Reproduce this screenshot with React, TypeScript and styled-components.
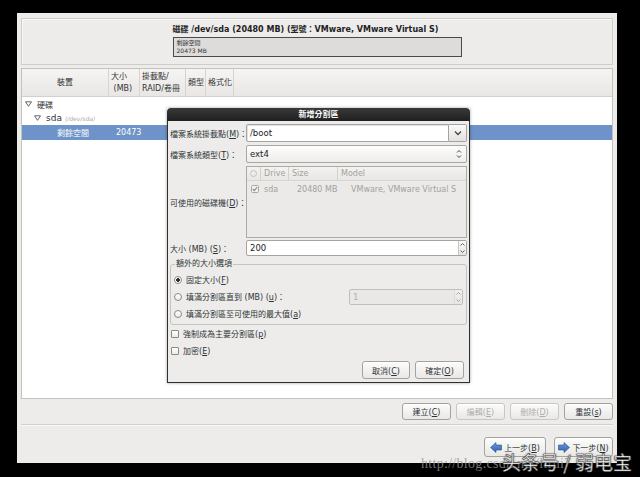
import React from "react";
import styled, { createGlobalStyle } from "styled-components";

const Global = createGlobalStyle`
  html, body { margin: 0; padding: 0; background: #000; }
  body {
    font-family: "DejaVu Sans", "Noto Sans CJK TC", sans-serif;
    font-size: 8px;
    color: #2e3436;
  }
  * { box-sizing: border-box; }
`;

const Screen = styled.div`
  position: relative;
  width: 640px;
  height: 477px;
  background: #000;
  padding: 13px 0 0 17px;
  overflow: hidden;
`;

const Window = styled.div`
  width: 600px;
  height: 450px;
  background: #edeceb;
  padding: 5px 4px 0 4px;
  display: flex;
  flex-direction: column;
`;

const DiskPanel = styled.div`
  height: 47px;
  border: 1px solid #cfcdc9;
  box-shadow: inset 1px 1px 0 #f8f8f7;
  display: flex;
  justify-content: center;
  padding-top: 6px;
`;

const DiskInfo = styled.div`
  width: 289px;
  display: flex;
  flex-direction: column;
  gap: 2px;
`;

const DiskTitle = styled.div`
  font-weight: bold;
  font-size: 8px;
  line-height: 10px;
  color: #222;
  white-space: nowrap;
`;

const DiskBar = styled.div`
  height: 20px;
  border: 1px solid #4a4a4a;
  background: #dddcda;
  padding: 1px 3px;
  font-size: 6px;
  line-height: 8px;
  color: #333;
`;

const TablePanel = styled.div`
  margin-top: 3px;
  height: 331px;
  border: 1px solid #c4c2be;
  display: flex;
  flex-direction: column;
  background: #fff;
`;

const HeaderRow = styled.div`
  height: 28px;
  display: flex;
  background: linear-gradient(#f5f4f3, #e8e7e5);
  border-bottom: 1px solid #d3d1cd;
`;

const HeaderCell = styled.div<{ $w: number; $center?: boolean }>`
  width: ${(p) => p.$w}px;
  border-right: 1px solid #d6d4d0;
  display: flex;
  flex-direction: column;
  justify-content: center;
  align-items: ${(p) => (p.$center ? "center" : "flex-start")};
  padding-left: ${(p) => (p.$center ? 0 : 2)}px;
  font-size: 8px;
  line-height: 12px;
  color: #333;
  white-space: pre;
`;

const TreeBody = styled.div`
  flex: 1;
  display: flex;
  flex-direction: column;
`;

const TreeRow = styled.div<{ $selected?: boolean; $indent: number }>`
  height: ${(p) => (p.$selected ? 15 : 14)}px;
  display: flex;
  align-items: center;
  padding-left: ${(p) => p.$indent}px;
  background: ${(p) => (p.$selected ? "#6d93c8" : "transparent")};
  color: ${(p) => (p.$selected ? "#fff" : "#333")};
  white-space: nowrap;
`;

const Cell = styled.span<{ $w?: number }>`
  display: inline-block;
  width: ${(p) => (p.$w ? `${p.$w}px` : "auto")};
`;

const DeviceName = styled.span`
  font-size: 9px;
  margin-left: 5px;
`;

const DevicePath = styled.span`
  font-size: 6px;
  font-style: italic;
  color: #a5a5a5;
  margin-left: 3px;
`;

const TreeLabel = styled.span`
  margin-left: 5px;
`;

const ButtonRow = styled.div`
  height: 25px;
  display: flex;
  justify-content: flex-end;
  align-items: center;
  gap: 5px;
`;

const Separator = styled.div`
  border-top: 1px solid #d2d0cc;
  border-bottom: 1px solid #fafafa;
`;

const NavRow = styled.div`
  margin-top: 11px;
  display: flex;
  justify-content: flex-end;
  gap: 8px;
`;

const Button = styled.button<{ $w: number; $h?: number; $disabled?: boolean }>`
  width: ${(p) => p.$w}px;
  height: ${(p) => p.$h ?? 17}px;
  padding: 0;
  margin: 0;
  font-family: inherit;
  font-size: 8px;
  color: ${(p) => (p.$disabled ? "#b0aeab" : "#2e3436")};
  background: linear-gradient(#fcfcfc, #e9e8e6);
  border: 1px solid ${(p) => (p.$disabled ? "#c9c7c3" : "#a5a29d")};
  border-radius: 3px;
  box-shadow: inset 0 1px 0 #fff;
  display: flex;
  align-items: center;
  justify-content: center;
  gap: 2px;
  white-space: nowrap;
`;

/* ---------- dialog ---------- */

const Dialog = styled.div`
  position: absolute;
  left: 167px;
  top: 108px;
  width: 303px;
  height: 275px;
  display: flex;
  flex-direction: column;
  box-shadow: 0 0 3px rgba(0, 0, 0, 0.35);
`;

const TitleBar = styled.div`
  height: 13px;
  background: linear-gradient(#3a3a3a, #1f1f1f);
  border-radius: 4px 4px 0 0;
  color: #fff;
  font-weight: bold;
  font-size: 8px;
  line-height: 13px;
  text-align: center;
`;

const DialogBody = styled.div`
  flex: 1;
  background: #edeceb;
  border: 1px solid #2f2f2f;
  border-top: none;
  padding: 0 2px 2px 2px;
  display: flex;
  flex-direction: column;
`;

const FormRow = styled.div<{ $mt: number }>`
  display: grid;
  grid-template-columns: 76px 221px;
  align-items: center;
  margin-top: ${(p) => p.$mt}px;
`;

const Label = styled.div`
  white-space: nowrap;
  color: #2e3436;
`;

const ComboGroup = styled.div`
  height: 18px;
  display: flex;
`;

const Entry = styled.div<{ $h: number }>`
  flex: 1;
  height: ${(p) => p.$h}px;
  background: #fff;
  border: 1px solid #a7a49f;
  border-radius: 2px 0 0 2px;
  box-shadow: inset 1px 1px 0 #e2e1df;
  padding-left: 3px;
  display: flex;
  align-items: center;
  font-size: 8.5px;
  color: #222;
`;

const DropButton = styled.div`
  width: 18px;
  height: 18px;
  background: linear-gradient(#fafafa, #e3e2e0);
  border: 1px solid #a7a49f;
  border-left: none;
  border-radius: 0 2px 2px 0;
  display: flex;
  align-items: center;
  justify-content: center;
`;

const ComboButton = styled.div`
  height: 18px;
  background: linear-gradient(#fdfdfd, #eeedeb);
  border: 1px solid #aaa7a2;
  border-radius: 2px;
  padding: 0 4px 0 3px;
  display: flex;
  align-items: center;
  justify-content: space-between;
  font-size: 8.5px;
  color: #222;
`;

const DriveList = styled.div`
  height: 72px;
  border: 1px solid #aeaba7;
  background: #ebeae8;
  display: flex;
  flex-direction: column;
`;

const DriveHeader = styled.div`
  height: 14px;
  display: flex;
  background: linear-gradient(#f3f2f1, #e8e7e5);
  border-bottom: 1px solid #d8d6d2;
  color: #a3a19d;
`;

const DriveCol = styled.div<{ $w?: number; $center?: boolean }>`
  width: ${(p) => (p.$w ? `${p.$w}px` : "auto")};
  flex: ${(p) => (p.$w ? "none" : "1")};
  border-right: ${(p) => (p.$w ? "1px solid #d3d1cd" : "none")};
  display: flex;
  align-items: center;
  justify-content: ${(p) => (p.$center ? "center" : "flex-start")};
  padding-left: ${(p) => (p.$center ? 0 : 3)}px;
  white-space: nowrap;
`;

const DriveRow = styled.div`
  height: 14px;
  display: flex;
  color: #a3a19d;
  margin-top: 1px;
`;

const DriveCell = styled.div<{ $w?: number; $pl: number }>`
  width: ${(p) => (p.$w ? `${p.$w}px` : "auto")};
  flex: ${(p) => (p.$w ? "none" : "1")};
  padding-left: ${(p) => p.$pl}px;
  display: flex;
  align-items: center;
  white-space: nowrap;
`;

const SpinBox = styled.div<{ $w?: number; $disabled?: boolean }>`
  width: ${(p) => (p.$w ? `${p.$w}px` : "100%")};
  height: 16px;
  background: ${(p) => (p.$disabled ? "#e9e8e6" : "#fff")};
  border: 1px solid ${(p) => (p.$disabled ? "#c2bfbb" : "#a7a49f")};
  border-radius: 2px;
  display: flex;
  align-items: center;
  justify-content: space-between;
  padding-left: 3px;
  font-size: 8.5px;
  color: ${(p) => (p.$disabled ? "#b3b1ae" : "#222")};
`;

const SpinArrows = styled.div<{ $disabled?: boolean }>`
  width: 8px;
  height: 14px;
  border-left: 1px solid ${(p) => (p.$disabled ? "#d2d0cc" : "#c9c7c3")};
  background: linear-gradient(#fafafa, #e6e5e3);
  display: flex;
  flex-direction: column;
  align-items: center;
  justify-content: space-around;
  opacity: ${(p) => (p.$disabled ? 0.5 : 1)};
`;

const Fieldset = styled.fieldset`
  margin: 3px 0 0 0;
  border: 1px solid #c6c4c0;
  border-radius: 3px;
  padding: 2px 3px 2px 3px;
  min-inline-size: 0;
`;

const Legend = styled.legend`
  padding: 0 1px;
  margin-left: 1px;
  font-size: 8px;
  line-height: 10px;
  color: #2e3436;
`;

const OptionRow = styled.div<{ $h: number }>`
  height: ${(p) => p.$h}px;
  display: flex;
  align-items: center;
  gap: 4px;
  white-space: nowrap;
`;

const Radio = styled.span<{ $on?: boolean }>`
  width: 8px;
  height: 8px;
  border-radius: 50%;
  border: 1px solid #8c8985;
  background: ${(p) =>
    p.$on
      ? "radial-gradient(circle, #2e2e2e 0 1.6px, #fff 1.9px)"
      : "linear-gradient(#fff, #ecebe9)"};
  flex: none;
`;

const Check = styled.span`
  width: 8px;
  height: 8px;
  border: 1px solid #8c8985;
  border-radius: 1px;
  background: linear-gradient(#fff, #ecebe9);
  flex: none;
  margin-left: 1px;
`;

const Spacer = styled.span`
  flex: 1;
`;

const DialogButtons = styled.div`
  margin-top: 2px;
  display: flex;
  justify-content: flex-end;
  gap: 5px;
  padding-right: 3px;
`;

/* ---------- watermark ---------- */

const WatermarkUrl = styled.div`
  position: absolute;
  left: 421px;
  top: 456px;
  font-family: "Liberation Serif", "DejaVu Serif", serif;
  font-size: 14px;
  color: rgba(150, 150, 150, 0.8);
  white-space: nowrap;
  letter-spacing: 0.3px;
`;

const WatermarkBrand = styled.div`
  position: absolute;
  left: 502px;
  top: 449px;
  font-family: "Noto Sans CJK SC", sans-serif;
  font-size: 19px;
  line-height: 26px;
  color: #fff;
  white-space: nowrap;
  -webkit-text-stroke: 0.6px #555;
  text-shadow: 0 0 2px rgba(0, 0, 0, 0.8);
`;

/* ---------- icons ---------- */

const Expander = () => (
  <svg width="7" height="6" viewBox="0 0 7 6">
    <path d="M0.5 0.8 L6.5 0.8 L3.5 5.3 Z" fill="#fff" stroke="#555" strokeWidth="0.9" />
  </svg>
);

const ChevronDown = () => (
  <svg width="8" height="6" viewBox="0 0 8 6">
    <path d="M1 1.5 L4 4.5 L7 1.5" fill="none" stroke="#444" strokeWidth="1.3" />
  </svg>
);

const UpDown = () => (
  <svg width="6" height="10" viewBox="0 0 6 10">
    <path d="M1 3.5 L3 1.5 L5 3.5 M1 6.5 L3 8.5 L5 6.5" fill="none" stroke="#444" strokeWidth="1" />
  </svg>
);

const TinyUp = () => (
  <svg width="5" height="3" viewBox="0 0 5 3">
    <path d="M0.5 2.5 L2.5 0.5 L4.5 2.5" fill="none" stroke="#555" strokeWidth="0.9" />
  </svg>
);

const TinyDown = () => (
  <svg width="5" height="3" viewBox="0 0 5 3">
    <path d="M0.5 0.5 L2.5 2.5 L4.5 0.5" fill="none" stroke="#555" strokeWidth="0.9" />
  </svg>
);

const CheckedGray = () => (
  <svg width="8" height="8" viewBox="0 0 8 8">
    <rect x="0.5" y="0.5" width="7" height="7" rx="1" fill="#f3f2f0" stroke="#aaa7a3" />
    <path d="M1.8 4 L3.3 5.6 L6.2 2.2" fill="none" stroke="#8c8a86" strokeWidth="1.1" />
  </svg>
);

const HeaderRadio = () => (
  <svg width="7" height="7" viewBox="0 0 7 7">
    <circle cx="3.5" cy="3.5" r="3" fill="none" stroke="#b9b7b3" strokeWidth="0.8" />
  </svg>
);

const ArrowLeft = () => (
  <svg width="12" height="11" viewBox="0 0 12 11">
    <defs>
      <linearGradient id="al" x1="0" y1="0" x2="0" y2="1">
        <stop offset="0" stopColor="#6a9ad8" />
        <stop offset="1" stopColor="#2d63b0" />
      </linearGradient>
    </defs>
    <path d="M0.5 5.5 L6 0.5 L6 3 L11.5 3 L11.5 8 L6 8 L6 10.5 Z" fill="url(#al)" stroke="#24508f" strokeWidth="0.6" />
  </svg>
);

const ArrowRight = () => (
  <svg width="12" height="11" viewBox="0 0 12 11">
    <defs>
      <linearGradient id="ar" x1="0" y1="0" x2="0" y2="1">
        <stop offset="0" stopColor="#6a9ad8" />
        <stop offset="1" stopColor="#2d63b0" />
      </linearGradient>
    </defs>
    <path d="M11.5 5.5 L6 0.5 L6 3 L0.5 3 L0.5 8 L6 8 L6 10.5 Z" fill="url(#ar)" stroke="#24508f" strokeWidth="0.6" />
  </svg>
);

export default function App() {
  return (
    <>
      <Global />
      <Screen>
        <Window>
          <DiskPanel>
            <DiskInfo>
              <DiskTitle>磁碟 /dev/sda (20480 MB) (型號：VMware, VMware Virtual S)</DiskTitle>
              <DiskBar>
                <div>剩餘空間</div>
                <div>20473 MB</div>
              </DiskBar>
            </DiskInfo>
          </DiskPanel>

          <TablePanel>
            <HeaderRow>
              <HeaderCell $w={87} $center>
                裝置
              </HeaderCell>
              <HeaderCell $w={31}>
                <span>大小</span>
                <span> (MB)</span>
              </HeaderCell>
              <HeaderCell $w={46}>
                <span>掛載點/</span>
                <span>RAID/卷冊</span>
              </HeaderCell>
              <HeaderCell $w={20}>類型</HeaderCell>
              <HeaderCell $w={28}>格式化</HeaderCell>
            </HeaderRow>
            <TreeBody>
              <TreeRow $indent={3}>
                <Expander />
                <TreeLabel>硬碟</TreeLabel>
              </TreeRow>
              <TreeRow $indent={12}>
                <Expander />
                <DeviceName>sda</DeviceName>
                <DevicePath>(/dev/sda)</DevicePath>
              </TreeRow>
              <TreeRow $indent={35} $selected>
                <Cell $w={59}>剩餘空間</Cell>
                <Cell>20473</Cell>
              </TreeRow>
            </TreeBody>
          </TablePanel>

          <ButtonRow>
            <Button $w={49}>
              <span>
                建立(<u>C</u>)
              </span>
            </Button>
            <Button $w={49} $disabled>
              <span>
                編輯(<u>E</u>)
              </span>
            </Button>
            <Button $w={49} $disabled>
              <span>
                刪除(<u>D</u>)
              </span>
            </Button>
            <Button $w={49}>
              <span>
                重設(<u>s</u>)
              </span>
            </Button>
          </ButtonRow>
          <Separator />
          <NavRow>
            <Button $w={62} $h={20}>
              <ArrowLeft />
              <span>
                上一步(<u>B</u>)
              </span>
            </Button>
            <Button $w={59} $h={20}>
              <ArrowRight />
              <span>
                下一步(<u>N</u>)
              </span>
            </Button>
          </NavRow>
        </Window>

        <Dialog>
          <TitleBar>新增分割區</TitleBar>
          <DialogBody>
            <FormRow $mt={3}>
              <Label>
                檔案系統掛載點(<u>M</u>)：
              </Label>
              <ComboGroup>
                <Entry $h={18}>/boot</Entry>
                <DropButton>
                  <ChevronDown />
                </DropButton>
              </ComboGroup>
            </FormRow>
            <FormRow $mt={3}>
              <Label>
                檔案系統類型(<u>T</u>)：
              </Label>
              <ComboButton>
                <span>ext4</span>
                <UpDown />
              </ComboButton>
            </FormRow>
            <FormRow $mt={3}>
              <Label>
                可使用的磁碟機(<u>D</u>)：
              </Label>
              <DriveList>
                <DriveHeader>
                  <DriveCol $w={14} $center>
                    <HeaderRadio />
                  </DriveCol>
                  <DriveCol $w={28}>Drive</DriveCol>
                  <DriveCol $w={49}>Size</DriveCol>
                  <DriveCol>Model</DriveCol>
                </DriveHeader>
                <DriveRow>
                  <DriveCell $w={17} $pl={4}>
                    <CheckedGray />
                  </DriveCell>
                  <DriveCell $w={33} $pl={0}>
                    sda
                  </DriveCell>
                  <DriveCell $w={54} $pl={0}>
                    20480 MB
                  </DriveCell>
                  <DriveCell $pl={0}>VMware, VMware Virtual S</DriveCell>
                </DriveRow>
              </DriveList>
            </FormRow>
            <FormRow $mt={2}>
              <Label>
                大小 (MB) (<u>S</u>)：
              </Label>
              <SpinBox>
                <span>200</span>
                <SpinArrows>
                  <TinyUp />
                  <TinyDown />
                </SpinArrows>
              </SpinBox>
            </FormRow>

            <Fieldset>
              <Legend>額外的大小選項</Legend>
              <OptionRow $h={17}>
                <Radio $on />
                <span>
                  固定大小(<u>F</u>)
                </span>
              </OptionRow>
              <OptionRow $h={17}>
                <Radio />
                <span>
                  填滿分割區直到 (MB) (<u>u</u>)：
                </span>
                <Spacer />
                <SpinBox $w={114} $disabled>
                  <span>1</span>
                  <SpinArrows $disabled>
                    <TinyUp />
                    <TinyDown />
                  </SpinArrows>
                </SpinBox>
              </OptionRow>
              <OptionRow $h={17}>
                <Radio />
                <span>
                  填滿分割區至可使用的最大值(<u>a</u>)
                </span>
              </OptionRow>
            </Fieldset>

            <OptionRow $h={17}>
              <Check />
              <span>
                強制成為主要分割區(<u>p</u>)
              </span>
            </OptionRow>
            <OptionRow $h={17}>
              <Check />
              <span>
                加密(<u>E</u>)
              </span>
            </OptionRow>

            <DialogButtons>
              <Button $w={48} $h={18}>
                <span>
                  取消(<u>C</u>)
                </span>
              </Button>
              <Button $w={49} $h={18}>
                <span>
                  確定(<u>O</u>)
                </span>
              </Button>
            </DialogButtons>
          </DialogBody>
        </Dialog>

        <WatermarkUrl>http://blog.csdn.net/lirui7</WatermarkUrl>
        <WatermarkBrand>头条号 / 弱电宝</WatermarkBrand>
      </Screen>
    </>
  );
}
